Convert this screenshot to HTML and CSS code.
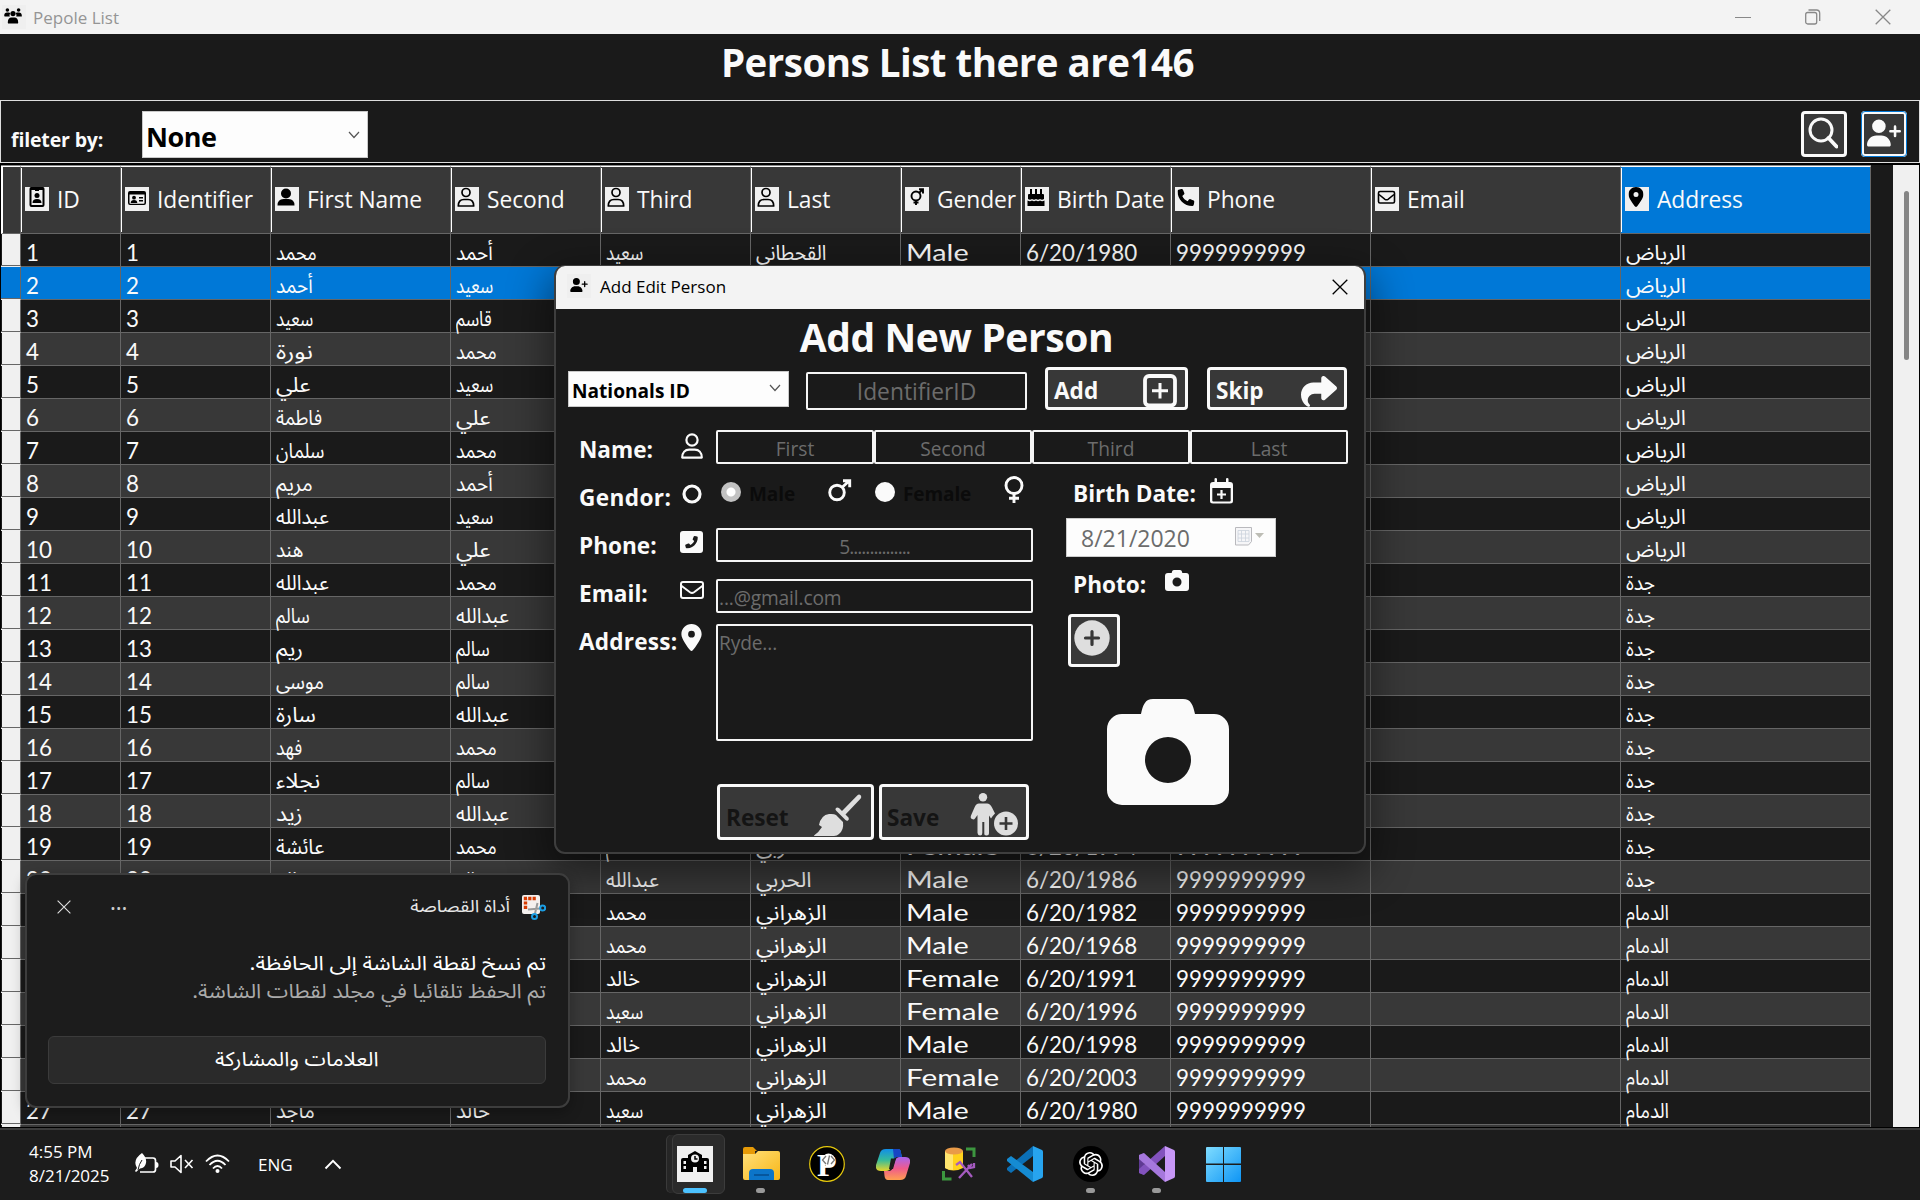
FILE: index.html
```html
<!DOCTYPE html>
<html lang="en">
<head>
<meta charset="utf-8">
<title>Pepole List</title>
<link rel="stylesheet" href="styles.css">
</head>
<body>
<svg class="sprite" aria-hidden="true">
  <symbol id="user-plus" viewBox="0 0 640 512"><path d="M96 128a128 128 0 1 1 256 0A128 128 0 1 1 96 128zM0 482.3C0 383.8 79.8 304 178.3 304h91.4C368.2 304 448 383.8 448 482.3c0 16.4-13.3 29.7-29.7 29.7H29.7C13.3 512 0 498.7 0 482.3zM504 312v-64h-64a24 24 0 0 1 0-48h64v-64a24 24 0 0 1 48 0v64h64a24 24 0 0 1 0 48h-64v64a24 24 0 0 1-48 0z"/></symbol>
  <symbol id="user-line" viewBox="0 0 22 26"><g fill="none" stroke="currentColor" stroke-width="2.2"><circle cx="11" cy="7" r="5.6"/><path d="M1.200 24.6c0-5 3-8 7-8h5.600c4 0 7 3 7 8z" stroke-linejoin="round"/></g></symbol>
  <symbol id="pin" viewBox="0 0 384 512"><path fill-rule="evenodd" d="M215.700 499.200C267 435 384 279.400 384 192C384 86 298 0 192 0S0 86 0 192c0 87.400 117 243 168.300 307.200c12.300 15.300 35.100 15.300 47.400 0zM192 128a64 64 0 1 1 0 128 64 64 0 1 1 0-128z"/></symbol>
  <symbol id="envelope" viewBox="0 0 24 18"><g fill="none" stroke="currentColor" stroke-width="2"><rect x="1" y="1" width="22" height="16" rx="2"/><path d="M1 4.500l9 6.800q2 1.400 4 0l9-6.800"/></g></symbol>
  <symbol id="phone" viewBox="0 0 512 512"><path d="M164.900 24.600c-7.700-18.600-28-28.500-47.400-23.200l-88 24C12.100 30.200 0 46 0 64C0 311.400 200.600 512 448 512c18 0 33.800-12.100 38.600-29.500l24-88c5.300-19.400-4.600-39.700-23.200-47.400l-96-40c-16.300-6.800-35.200-2.100-46.300 11.600L304.700 368C234.300 334.700 177.300 277.700 144 207.300L193.300 167c13.700-11.200 18.400-30 11.600-46.300l-40-96z"/></symbol>
  <symbol id="camera" viewBox="0 0 122 106"><path fill-rule="evenodd" d="M34 15C36 6 38 0 46 0H76C84 0 86 6 88 15H107A15 15 0 0 1 122 30V91A15 15 0 0 1 107 106H15A15 15 0 0 1 0 91V30A15 15 0 0 1 15 15ZM61 38a23 23 0 1 0 0 46 23 23 0 1 0 0-46Z"/></symbol>
  <symbol id="chevron" viewBox="0 0 12 8"><path d="M1 1l5 5.500L11 1" fill="none" stroke="#555" stroke-width="1.200"/></symbol>
  <symbol id="close" viewBox="0 0 16 16"><path d="M.7.7l14.600 14.600M15.300.7L.7 15.300" fill="none" stroke="currentColor" stroke-width="1.300"/></symbol>
  <symbol id="plus-disc" viewBox="0 0 36 36"><circle cx="18" cy="18" r="17.700"/><path d="M18 11.500v13M11.500 18h13" stroke="#383838" stroke-width="3.200" stroke-linecap="round"/></symbol>
  <symbol id="group" viewBox="0 0 44 40"><circle cx="8" cy="5" r="4.500"/><circle cx="36" cy="5" r="4.500"/><circle cx="22" cy="14" r="6.500"/><path d="M0 19c0-5 3-8 7-8h3c3 0 5 1 5 3-2 2-2 5-1 7H1zM44 19c0-5-3-8-7-8h-3c-3 0-5 1-5 3 2 2 2 5 1 7h14zM9 36c0-8 4-12 9-12h8c5 0 9 4 9 12 0 2-1 3-3 3H12c-2 0-3-1-3-3z"/></symbol>
  <symbol id="badge" viewBox="0 0 24 24"><path fill-rule="evenodd" d="M6 0h12q1.500 0 1.500 2v16q0 2-2 2h-11q-2 0-2-2V2q0-2 1.500-2zM6.500 3v15h11V3h-3.500v1h-4V3z"/><circle cx="12" cy="8.500" r="2.500"/><path d="M7.500 16q0-4 4.500-4t4.500 4z"/></symbol>
  <symbol id="idcard" viewBox="0 0 24 24"><path fill-rule="evenodd" d="M5 4h14q2 0 2 2v10q0 2-2 2H5q-2 0-2-2V6q0-2 2-2zM4.500 7.500V16q0 .8.800.8h13.400q.8 0 .8-.8V7.500z"/><circle cx="9" cy="10.700" r="1.900"/><path d="M5.700 16q0-3 3.300-3t3.300 3zM14 10h4v1.400h-4zM14 13h4v1.400h-4z"/></symbol>
  <symbol id="user" viewBox="0 0 24 24"><circle cx="11" cy="6.500" r="5"/><path d="M2.500 18.500q0-6.500 6-6.500h5q6 0 6 6.500z"/></symbol>
  <symbol id="user-open" viewBox="0 0 24 24"><g fill="none" stroke="#000" stroke-width="1.700"><circle cx="11" cy="5.500" r="4"/><path d="M3.300 19q0-6.500 5.700-6.500h4q5.700 0 5.700 6.500z" stroke-linejoin="round"/></g></symbol>
  <symbol id="gender" viewBox="0 0 24 24"><g fill="none" stroke="#000" stroke-width="1.900"><circle cx="11" cy="9" r="4.500"/><path d="M14 6l4-4M14 2.300h4V6.500M11 13.500V18M8.500 15.500h5"/></g></symbol>
  <symbol id="cake" viewBox="0 0 24 24"><path d="M5 2h2v5H5zM10 2h2v5h-2zM15 2h2v5h-2zM4 7h14q1 0 1 1v4q-2 1.500-4 0-2 1.500-4 0-2 1.500-4 0-2 1.500-4 0V8q0-1 1-1zM2.500 13.500q2.500 1.500 4.500 0 2 1.500 4 0 2 1.500 4 0 2 1.500 4.500 0V19h-17z"/></symbol>
  <symbol id="mail" viewBox="0 0 24 24"><g fill="none" stroke="#000" stroke-width="1.600"><rect x="3.500" y="4.500" width="16" height="11.500" rx="1.500"/><path d="M4 7.500l6 4.800q1.500 1 3 0l6-4.800"/></g></symbol>
</svg>

<div class="desktop">
  <header class="titlebar">
    <span class="app-icon"><svg width="18" height="16"><use href="#group"/></svg></span>
    <span class="titlebar-text">Pepole List</span>
    <span class="window-controls">
      <svg width="16" height="16" viewBox="0 0 16 16"><path d="M0 8.500h16" stroke="#888"/></svg>
      <svg width="16" height="16" viewBox="0 0 16 16" fill="none" stroke="#888" stroke-width="1.300"><rect x=".7" y="3.500" width="11" height="11.500" rx="2"/><path d="M3.500 1h8q3.200 0 3.200 3.200V12"/></svg>
      <svg width="16" height="16"><use href="#close"/></svg>
    </span>
  </header>

  <h1 class="heading">Persons List there are146</h1>

  <section class="filter">
    <span class="filter-label">fileter by:</span>
    <div class="combo combo-filter"><span>None</span><svg width="12" height="8"><use href="#chevron"/></svg></div>
    <div class="filter-actions">
      <button class="tool"><svg width="30" height="32" viewBox="0 0 30 32" fill="none" stroke="#fafafa"><ellipse cx="13" cy="13" rx="11" ry="11" stroke-width="3"/><path d="M20.500 21l8 8.500" stroke-width="3.800" stroke-linecap="round"/></svg></button>
      <button class="tool tool-focus"><svg width="34" height="28"><use href="#user-plus"/></svg></button>
    </div>
  </section>

  <main class="table-area">
    <div class="table" id="table">
      <div class="row head">
        <div class="stub"></div>
        <div class="th"><svg><use href="#badge"/></svg><span>ID</span></div>
        <div class="th"><svg><use href="#idcard"/></svg><span>Identifier</span></div>
        <div class="th"><svg><use href="#user"/></svg><span>First Name</span></div>
        <div class="th"><svg><use href="#user-open"/></svg><span>Second</span></div>
        <div class="th"><svg><use href="#user-open"/></svg><span>Third</span></div>
        <div class="th"><svg><use href="#user-open"/></svg><span>Last</span></div>
        <div class="th"><svg><use href="#gender"/></svg><span>Gender</span></div>
        <div class="th"><svg><use href="#cake"/></svg><span>Birth Date</span></div>
        <div class="th"><svg viewBox="0 0 24 24"><use href="#phone" x="2.500" y="2" width="17" height="17"/></svg><span>Phone</span></div>
        <div class="th"><svg><use href="#mail"/></svg><span>Email</span></div>
        <div class="th picked"><svg viewBox="0 0 24 24"><use href="#pin" x="3.500" y="0" width="15" height="20"/></svg><span>Address</span></div>
      </div>
    </div>
    <div class="scrollbar"><div class="thumb"></div></div>
  </main>

  <footer class="taskbar">
    <div class="clock"><span>4:55 PM</span><span>8/21/2025</span></div>
    <div class="tray">
      <svg width="25" height="22" viewBox="0 0 25 22"><path d="M10 5h9q2.500 0 2.500 2.500v9q0 2.500-2.500 2.500H6" fill="none" stroke="#fff" stroke-width="1.700"/><path d="M22 9q2.500 0 2.500 3t-2.500 3z" fill="#fff"/><path d="M8 0q5 5 4 10-1 5-6 5.500L2 19l-1-1 2-3Q-2 7 8 0z" fill="#fff"/><path d="M4 17q1-6 4-10" stroke="#1c1c1c" fill="none"/></svg>
      <svg width="24" height="20" viewBox="0 0 24 20" fill="none" stroke="#fff" stroke-width="1.600"><path d="M1 7h4l6-5.500v17L5 13H1z" stroke-linejoin="round"/><path d="M15 6l7.500 8M22.500 6L15 14"/></svg>
      <svg width="25" height="20" viewBox="0 0 25 20" fill="none" stroke="#fff" stroke-width="1.800"><path d="M1 7.500q11.500-12 23 0M4.500 11q8-8.500 16 0M8 14.500q4.500-5 9 0"/><circle cx="12.500" cy="17" r="2" fill="#fff" stroke="none"/></svg>
    </div>
    <span class="lang">ENG</span>
    <svg class="tray-more" width="18" height="11" viewBox="0 0 18 11"><path d="M1.500 9.500L9 1.800l7.500 7.700" fill="none" stroke="#fff" stroke-width="1.900"/></svg>

    <nav class="apps">
      <div class="app stacked"><span class="tile"><svg width="36" height="36" viewBox="0 0 36 36"><rect width="36" height="36" fill="#f0f0f0"/><path fill="#000" fill-rule="evenodd" d="M4 14q0-2 2-2h5V9l7-4 7 4v3h5q2 0 2 2v12H20v-5h-4v5H4zM6.500 15v3H9v-3zM6.500 20v3H9v-3zM27 15v3h2.500v-3zM27 20v3h2.500v-3zM18 8.500a4 4 0 1 0 0 8 4 4 0 1 0 0-8z"/><path d="M18 10v3h2.500" fill="none" stroke="#000" stroke-width="1.500"/></svg></span><i class="run active"></i></div>
      <div class="app"><svg width="37" height="34" viewBox="0 0 37 34"><defs><linearGradient id="fold" x2="1" y2="1"><stop stop-color="#ffe07a"/><stop offset="1" stop-color="#f8b617"/></linearGradient></defs><path d="M0 2q0-2 2-2h8l4 4h-2v10H0z" fill="#e69a07"/><path d="M0 7h12l3-3h20q2 0 2 2v25q0 2-2 2H2q-2 0-2-2z" fill="url(#fold)"/><path d="M6 33v-7q0-4 4-4h17q4 0 4 4v7z" fill="#0c75c9"/><path d="M11 28h15" stroke="#064f92" stroke-width="1.600"/></svg><i class="run"></i></div>
      <div class="app"><svg width="36" height="36" viewBox="0 0 36 36"><circle cx="18" cy="18" r="17.300" fill="#000" stroke="#e5c80d" stroke-width="1.200"/><text x="8" y="30" class="p-letter">P</text><circle cx="19.500" cy="14" r="6.500" fill="#fff"/><path d="M17 10l-3.500 4 3.500 4M22 10l3.500 4-3.500 4M20.500 9.500l-2 9" stroke="#777" fill="none" stroke-width="1.300"/></svg></div>
      <div class="app"><svg width="34" height="31" viewBox="0 0 34 31"><defs><linearGradient id="ca" x2="0" y2="1"><stop stop-color="#118ee9"/><stop offset=".5" stop-color="#35bb9b"/><stop offset="1" stop-color="#e8d52a"/></linearGradient><linearGradient id="cb" x2="0" y2="1"><stop stop-color="#a864ef"/><stop offset=".5" stop-color="#ef5b8c"/><stop offset="1" stop-color="#ff9f50"/></linearGradient></defs><path d="M10 0h12q3 0 3 4l1 4h-5q-3 0-4 4l-2 6q-1 4-5 4H5q-6 0-5-6L4 4q1-4 6-4z" fill="url(#ca)"/><path d="M24 31H12q-3 0-3.500-4L8 22h5q3 0 4-4l2-6q1-4 5-4h5q6 0 5 6l-4 13q-1 4-6 4z" fill="url(#cb)"/><path d="M17 0h5q3 0 3 4l1 4h-5q-2 0-3 2z" fill="#1745c4"/><path d="M15 9.500h5l-3 10.500h-4z" fill="#1c1c1c"/></svg></div>
      <div class="app"><svg width="34" height="34" viewBox="0 0 34 34"><path d="M3 4v17q8 5 18 0V4z" fill="#ffd21c"/><path d="M3 4v17q3 2 8 2V4z" fill="#ffe56f"/><ellipse cx="12" cy="4" rx="9" ry="3.500" fill="#e99b48"/><path d="M24 2h8v8M1.500 24v8h8" fill="none" stroke="#3c963f" stroke-width="3"/><path d="M14 18l4-3 12 15M30 17L17 31M26 18l2 3 4-1v-4" fill="none" stroke="#a55bc0" stroke-width="2.300"/></svg></div>
      <div class="app"><svg width="36" height="36" viewBox="0 0 36 36"><path d="M26 0v10L4 27l-4-3v-2z" fill="#0b70b7"/><path d="M26 36V26L4 10l-4 3v2z" fill="#158bd2"/><path d="M26 0l9 4q1 .5 1 2v24q0 1.500-1 2l-9 4z" fill="#27a4ef"/></svg></div>
      <div class="app"><svg width="36" height="36" viewBox="0 0 36 36"><circle cx="18" cy="18" r="18" fill="#000"/><path transform="translate(6 6)" fill="#fff" d="M22.2819 9.8211a5.9847 5.9847 0 0 0-.5157-4.9108 6.0462 6.0462 0 0 0-6.5098-2.9A6.0651 6.0651 0 0 0 4.9807 4.1818a5.9847 5.9847 0 0 0-3.9977 2.9 6.0462 6.0462 0 0 0 .7427 7.0966 5.98 5.98 0 0 0 .511 4.9107 6.051 6.051 0 0 0 6.5146 2.9001A5.9847 5.9847 0 0 0 13.2599 24a6.0557 6.0557 0 0 0 5.7718-4.2058 5.9894 5.9894 0 0 0 3.9977-2.9001 6.0557 6.0557 0 0 0-.7475-7.0729zm-9.022 12.6081a4.4755 4.4755 0 0 1-2.8764-1.0408l.1419-.0804 4.7783-2.7582a.7948.7948 0 0 0 .3927-.6813v-6.7369l2.02 1.1686a.071.071 0 0 1 .038.052v5.5826a4.504 4.504 0 0 1-4.4945 4.4944zm-9.6607-4.1254a4.4708 4.4708 0 0 1-.5346-3.0137l.142.0852 4.783 2.7582a.7712.7712 0 0 0 .7806 0l5.8428-3.3685v2.3324a.0804.0804 0 0 1-.0332.0615L9.74 19.9502a4.4992 4.4992 0 0 1-6.1408-1.6464zM2.3408 7.8956a4.485 4.485 0 0 1 2.3655-1.9728V11.6a.7664.7664 0 0 0 .3879.6765l5.8144 3.3543-2.0201 1.1685a.0757.0757 0 0 1-.071 0l-4.8303-2.7865A4.504 4.504 0 0 1 2.3408 7.872zm16.5963 3.8558L13.1038 8.364 15.1192 7.2a.0757.0757 0 0 1 .071 0l4.8303 2.7913a4.4944 4.4944 0 0 1-.6765 8.1042v-5.6772a.79.79 0 0 0-.407-.667zm2.0107-3.0231l-.142-.0852-4.7735-2.7818a.7759.7759 0 0 0-.7854 0L9.409 9.2297V6.8974a.0662.0662 0 0 1 .0284-.0615l4.8303-2.7866a4.4992 4.4992 0 0 1 6.6802 4.66zM8.3065 12.863l-2.02-1.1638a.0804.0804 0 0 1-.038-.0567V6.0742a4.4992 4.4992 0 0 1 7.3757-3.4537l-.142.0805L8.704 5.459a.7948.7948 0 0 0-.3927.6813zm1.0976-2.3654l2.602-1.4998 2.6069 1.4998v2.9994l-2.5974 1.4997-2.6067-1.4997Z"/></svg><i class="run"></i></div>
      <div class="app"><svg width="36" height="36" viewBox="0 0 36 36"><path d="M0 9l5-2v22l-5-2z" fill="#5f3a93"/><path d="M26 0v10L5 29l-5-2v-4z" fill="#8252bd"/><path d="M5 7l21 19v10L0 13V9z" fill="#a678dd"/><path d="M26 0l9 4q1 .5 1 2v24q0 1.500-1 2l-9 4z" fill="#c797f7"/></svg><i class="run"></i></div>
      <div class="app"><svg width="35" height="35" viewBox="0 0 35 35"><defs><linearGradient id="win" gradientUnits="userSpaceOnUse" x1="0" y1="0" x2="35" y2="35"><stop stop-color="#7fdcff"/><stop offset="1" stop-color="#0e95f5"/></linearGradient></defs><path fill="url(#win)" d="M1 0h16v16.500H0V1q0-1 1-1zM18 0h16q1 0 1 1v15.500H18zM0 18h17v17H1q-1 0-1-1zM18 18h17v16q0 1-1 1H18z"/></svg></div>
    </nav>
  </footer>

  <div class="dialog">
    <div class="dialog-bar">
      <span class="app-icon"><svg width="18" height="14"><use href="#user-plus"/></svg></span>
      <span class="dialog-caption">Add Edit Person</span>
      <svg class="dialog-close" width="16" height="16"><use href="#close"/></svg>
    </div>
    <h2 class="dialog-title">Add New Person</h2>

    <div class="identity">
      <div class="combo combo-id"><span>Nationals ID</span><svg width="12" height="8"><use href="#chevron"/></svg></div>
      <div class="field field-id">IdentifierID</div>
      <button class="btn btn-add"><span>Add</span><svg width="34" height="33" viewBox="0 0 34 33" fill="none" stroke="#fafafa"><rect x="2" y="2" width="30" height="29.500" rx="4" stroke-width="3.800"/><path d="M17 9v15.500M9 16.800h16" stroke-width="3"/></svg></button>
      <button class="btn btn-skip"><span>Skip</span><svg width="36" height="31" viewBox="0 32 512 450" preserveAspectRatio="none"><path d="M307 34.800c-11.500 5.100-19 16.600-19 29.200v64H176C78.800 128 0 206.800 0 304C0 417.300 81.500 467.900 100.200 478.100c2.500 1.400 5.300 1.900 8.100 1.900c10.900 0 19.700-8.900 19.700-19.700c0-7.500-4.300-14.400-9.800-19.500C108.800 431.900 96 414.400 96 384c0-53 43-96 96-96h96v64c0 12.600 7.400 24.100 19 29.200s25 3 34.400-5.400l160-144c6.700-6.100 10.600-14.700 10.600-23.800s-3.800-17.700-10.600-23.800l-160-144c-9.400-8.500-22.900-10.600-34.400-5.400z"/></svg></button>
    </div>

    <div class="line line-name">
      <span class="label">Name:</span>
      <span class="glyph"><svg width="22" height="26"><use href="#user-line"/></svg></span>
      <div class="names"><div class="field">First</div><div class="field">Second</div><div class="field">Third</div><div class="field">Last</div></div>
    </div>

    <div class="columns">
      <div class="left">
        <div class="line line-gender">
          <span class="label">Gendor:</span>
          <span class="glyph"><svg width="20" height="20" viewBox="0 0 20 20"><circle cx="10" cy="10" r="8" fill="none" stroke="#fafafa" stroke-width="3.200"/></svg></span>
          <div class="radios">
            <i class="radio checked"></i><b class="r-male">Male</b>
            <svg class="mars" width="24" height="23" viewBox="0 0 24 23" fill="none" stroke="#fafafa" stroke-width="2.900"><circle cx="9" cy="13.500" r="7.300"/><path d="M14 8.500l7-6.500M15 1.800h6.700v6.500"/></svg>
            <i class="radio"></i><b class="r-female">Female</b>
            <svg class="venus" width="20" height="27" viewBox="0 0 20 27" fill="none" stroke="#fafafa" stroke-width="2.900"><circle cx="10" cy="9.500" r="8"/><path d="M10 17.500V27M5 22.200h10"/></svg>
          </div>
        </div>
        <div class="line line-phone">
          <span class="label">Phone:</span>
          <span class="glyph"><svg width="23" height="22" viewBox="0 0 23 22"><rect width="23" height="22" rx="3"/><use href="#phone" transform="translate(23 0) scale(-1 1)" x="5" y="5" width="13" height="12.500" fill="#1a1a1a"/></svg></span>
          <div class="field">5...............</div>
        </div>
        <div class="line line-email">
          <span class="label">Email:</span>
          <span class="glyph"><svg width="24" height="18"><use href="#envelope"/></svg></span>
          <div class="field">...@gmail.com</div>
        </div>
        <div class="line line-address">
          <span class="label">Address:</span>
          <span class="glyph"><svg width="21" height="27"><use href="#pin"/></svg></span>
          <div class="field field-area">Ryde...</div>
        </div>
        <div class="commands">
          <button class="btn btn-reset"><span>Reset</span><svg width="48" height="43" viewBox="0 0 48 43" fill="#dedede"><path d="M0 41.500Q5 38 8 33L5 31Q7 21 15 20q5-.5 7 1l7 7q1 8-4 12-2 2-5 2H1q-1 0-1-.500z"/><path d="M22 14q1-1 3 0l3 3L43.500 1.200Q45 0 46.700 1.200 48 3 46.700 4.500L31.500 20.500l3 3q1 2-.5 3-1.200.8-2.500-.5L22 16.500q-1.200-1.200 0-2.500z"/></svg></button>
          <button class="btn btn-save"><span>Save</span><svg width="48" height="43" viewBox="0 0 48 43" fill="#dedede"><circle cx="13" cy="4.200" r="4.200"/><path d="M9 10.500h8q3 0 5 4l3 6q-3 3-4 5l-2-3v17.500q0 2.500-2.500 2.500T14.300 40V29h-2v11q0 2.500-2.200 2.500T7.500 40V22L5 25.500Q4 27 2 26t-1-3.500l3.500-8Q6 10.500 9 10.500z"/><circle cx="36" cy="30.500" r="12"/><path d="M36 24v13M29.500 30.500h13" stroke="#383838" stroke-width="2.600"/></svg></button>
        </div>
      </div>

      <div class="right">
        <div class="caption caption-birth"><span>Birth Date:</span><svg width="23" height="26" viewBox="0 0 23 26"><path fill-rule="evenodd" d="M4.500 1q0-1 1.200-1T7 1v3h9V1q0-1 1.200-1t1.300 1v3H20q3 0 3 3v16q0 2.500-3 2.500H3q-3 0-3-2.500V7q0-3 3-3h1.500zM2.300 10v12.500q0 1 1 1h16.400q1 0 1-1V10z"/><path d="M11.500 12v9M7 16.500h9" stroke="#fafafa" stroke-width="2.200"/></svg></div>
        <div class="date"><span>8/21/2020</span><svg width="29" height="19" viewBox="0 0 29 19"><path d="M.5.500h16v14l-3 3.500H.5z" fill="#f6f6f8" stroke="#b9b9bd"/><path d="M3 3.500h11v11H3zM3 7h11M3 11h11M6.500 3.500v11M10.500 3.500v11" fill="none" stroke="#ccd3dc" stroke-width=".8"/><path d="M20 6h9l-4.500 5z" fill="#bdbdb5"/></svg></div>
        <div class="caption caption-photo"><span>Photo:</span><svg width="24" height="21"><use href="#camera"/></svg></div>
        <button class="btn btn-photo"><svg width="36" height="36" fill="#dedede"><use href="#plus-disc"/></svg></button>
        <svg class="photo" width="122" height="106"><use href="#camera"/></svg>
      </div>
    </div>
  </div>

  <div class="toast" dir="rtl" lang="ar">
    <div class="toast-head">
      <svg width="24" height="25" viewBox="0 0 24 25"><rect width="18" height="19" rx="2" fill="#f4f0ee"/><path d="M3.500 14V3.500H14" fill="none" stroke="#d83b01" stroke-width="3.400" stroke-dasharray="3.200 1.200"/><path d="M13 18.500L15.500 8M6 14.500l12-1" stroke="#9a9a9a" stroke-width="2"/><g fill="none" stroke="#1b9de2" stroke-width="2"><circle cx="12.500" cy="21.500" r="2.500"/><circle cx="20.700" cy="13" r="2.500"/></g></svg>
      <span class="toast-app">أداة القصاصة</span>
      <span class="toast-more">…</span>
      <svg class="toast-close" width="14" height="14"><use href="#close"/></svg>
    </div>
    <p class="toast-title"><span>تم نسخ لقطة الشاشة إلى الحافظة.</span></p>
    <p class="toast-sub"><span>تم الحفظ تلقائيا في مجلد لقطات الشاشة.</span></p>
    <div class="toast-button"><span>العلامات والمشاركة</span></div>
  </div>
</div>
<script src="script.js"></script>
</body>
</html>
```
FILE: styles.css
```css
* { box-sizing: border-box; }
body {
  margin: 0;
  background: #1a1a1a;
  color: #fafafa;
  fill: currentColor;
  font-family: "Open Sans", "Noto Sans Arabic", "DejaVu Sans", sans-serif;
  overflow: hidden;
}
.sprite { position: absolute; width: 0; height: 0; }
svg { display: block; flex: none; }
button { font: inherit; color: inherit; padding: 0; margin: 0; }
.desktop { width: 1920px; height: 1200px; display: flex; flex-direction: column; position: relative; overflow: hidden; }

/* main window */
.titlebar { height: 34px; background: #f3f3f3; color: #959595; display: flex; align-items: center; padding: 0 29px 0 2px; flex: none; }
.app-icon { width: 24px; height: 24px; background: #efefef; color: #000; display: flex; align-items: flex-start; justify-content: center; padding-top: 3px; }
.titlebar .app-icon { margin-top: 0; padding-right: 2px; }
.titlebar-text { font-size: 17px; letter-spacing: 0; margin-left: 7px; }
.window-controls { margin-left: auto; display: flex; gap: 54px; color: #888; }
.heading { margin: 0; height: 66px; flex: none; font-size: 38.5px; line-height: 57px; letter-spacing: -.5px; text-align: center; text-indent: -5px; }
.filter { height: 63px; flex: none; border: 1px solid #dedede; display: flex; align-items: flex-start; padding: 10px 12px 0 10px; }
.filter-label { font-size: 19.5px; font-weight: 700; line-height: 28px; letter-spacing: -.15px; margin-top: 15px; width: 131px; }
.combo { background: #fdfdfd; color: #000; border: 1px solid #c9c9c9; display: flex; align-items: center; justify-content: space-between; font-weight: 700; }
.combo-filter { width: 226px; height: 47px; padding: 4px 7px 0 3px; font-size: 27px; letter-spacing: -.5px; }
.combo-filter svg { margin-top: -4px; }
.filter-actions { margin-left: auto; display: flex; gap: 14px; }
.tool { width: 46px; height: 46px; background: #383838; border: 3px solid #fafafa; border-radius: 4px; display: flex; padding: 3px 0 0 4px; }
.tool-focus { outline: 1px solid #0078d7; outline-offset: -1px; padding: 5px 0 0 3px; }

/* table */
.table-area { flex: 1; min-height: 0; display: flex; border-top: 2px solid #000; border-left: 1px solid #000; border-right: 1px solid #000; overflow: hidden; }
.table { width: 1870px; flex: none; overflow: hidden; }
.row { display: grid; grid-template-columns: 20px 100px 150px 180px 150px 150px 150px 120px 150px 200px 250px 250px; height: 33px; }
.row > div { border-right: 1px solid #666; border-bottom: 1px solid #666; white-space: nowrap; min-width: 0; }
.row > .stub { background: linear-gradient(90deg, #1a1a1a 1px, #f0f0f0 1px); border-bottom-color: #f0f0f0; box-shadow: inset 0 -1px 0 #666; }
.row.alt { background: #383838; }
.row.selected, .row.selected > .stub { background: #0078d7; }
.row.head { height: 69px; background: #383838; border-top: 1px solid #888; }
.row.head > .stub { background: #383838; border-top: 1px solid #fff; border-left: 2px solid #fff; border-bottom-color: #666; box-shadow: none; }
.th { display: flex; align-items: center; border-top: 1px solid #fff; background: linear-gradient(#fff, #fff) 0 1px / 1px 64px no-repeat; padding: 0 0 2px 4px; font-size: 22.8px; letter-spacing: -.05px; }
.th svg { width: 24px; height: 24px; background: #f0f0f0; color: #000; fill: #000; }
.th span { margin-left: 8px; }
.th.picked { background: linear-gradient(#fff, #fff) 0 1px / 1px 64px no-repeat #0078d7; }
.td { padding: 2px 0 0 5px; font-family: Lato, "DejaVu Sans", sans-serif; font-size: 22.4px; line-height: 33px; height: 33px; }
.td.ar { padding: 3px 0 0 5px; line-height: 32px; font-family: "Noto Sans Arabic", "DejaVu Sans", sans-serif; font-size: 21px; }
.td.ar span, .td.gender span { display: inline-block; transform-origin: 0 50%; transform: scaleX(var(--stretch, 1)); }
.scrollbar { width: 26px; margin-left: auto; background: #f0f0f0; padding-top: 26px; }
.thumb { width: 5px; height: 169px; margin-left: 11px; background: #858585; border-radius: 3px; }

/* taskbar */
.taskbar { height: 73px; flex: none; background: #1c1c1c; border-top: 1px solid #000; box-shadow: inset 0 2px 0 #3c3c3c; display: flex; align-items: center; position: relative; padding-left: 29px; color: #fff; }
.clock { display: flex; flex-direction: column; font-size: 17px; line-height: 24px; letter-spacing: 0; width: 105px; }
.tray { display: flex; align-items: center; gap: 11px; }
.lang { font-size: 17px; letter-spacing: 0; margin-left: 28px; width: 66px; }
.apps { position: absolute; left: 662px; top: 0; display: flex; }
.app { width: 66px; height: 72px; display: flex; justify-content: center; align-items: center; position: relative; }
.tile { width: 53px; height: 60px; background: #2b2b2b; border: 1px solid #3c3c3c; border-radius: 6px; display: grid; place-items: center; margin-left: 6px; box-shadow: -6px 0 0 -1px #262626, -7px 0 0 -1px #3a3a3a; }
.stacked .tile svg { margin-left: -6px; }
.run { position: absolute; bottom: 7px; left: 28px; width: 9px; height: 5px; border-radius: 3px; background: #999; }
.run.active { left: 21px; width: 24px; background: #4cc2ff; }
.p-letter { font: 700 32px "Liberation Serif", serif; fill: #fff; }

/* dialog */
.dialog { position: absolute; left: 554px; top: 265px; width: 812px; height: 589px; background: #1a1a1a; border: 2px solid #3e3e3e; border-top-width: 1px; border-radius: 11px; overflow: hidden; display: flex; flex-direction: column; box-shadow: 0 14px 40px 6px rgba(0, 0, 0, .45); }
.dialog-bar { height: 43px; flex: none; background: #f3f3f3; color: #000; display: flex; align-items: center; padding: 0 16px 0 11px; }
.dialog-bar .app-icon { margin-top: -3px; padding-top: 4px; }
.dialog-caption { font-size: 17px; letter-spacing: 0; margin: -3px 0 0 9px; }
.dialog-close { margin: -2px 0 0 auto; }
.dialog-title { margin: 0; height: 58px; flex: none; font-size: 39px; line-height: 56px; letter-spacing: -.4px; text-align: center; text-indent: -7px; }
.identity { height: 63px; flex: none; display: flex; align-items: flex-start; padding-left: 12px; }
.combo-id { width: 221px; height: 36px; margin: 4px 17px 0 0; font-size: 19.100px; padding: 3px 7px 0 3px; letter-spacing: 0; }
.combo-id svg { margin-top: -5px; }
.field { border: 2px solid #f5f5f5; border-radius: 2px; color: #6c6c6c; height: 34px; font-size: 19.200px; line-height: 33px; white-space: nowrap; text-align: center; }
.field-id { width: 221px; height: 38px; margin: 5px 18px 0 0; font-size: 22.800px; line-height: 36px; }
.btn { border: 3px solid #fafafa; border-radius: 4px; background: #383838; display: flex; justify-content: space-between; align-items: flex-start; font-weight: 700; font-size: 22.600px; line-height: 31px; white-space: nowrap; }
.btn-add { width: 143px; height: 43px; margin-right: 19px; padding: 5px 8px 0 6px; }
.btn-add svg { margin-top: -1px; }
.btn-skip { width: 140px; height: 43px; padding: 5px 7px 0 6px; }
.btn-skip svg { margin-top: 1px; }
.line { display: flex; align-items: flex-start; padding-left: 23px; }
.label { width: 100px; font-weight: 700; font-size: 22.600px; line-height: 30px; letter-spacing: 0; white-space: nowrap; }
.glyph { width: 25px; display: flex; justify-content: center; margin-right: 12px; flex: none; }
.line-name { height: 34px; flex: none; }
.line-name .label { margin-top: 5px; }
.line-name .glyph { margin-top: 3px; }
.names { display: grid; grid-template-columns: repeat(4, 158px); }
.columns { display: flex; gap: 32px; }
.left { width: 478px; }
.line-gender { height: 64px; }
.line-gender .label { margin-top: 19px; letter-spacing: .4px; }
.line-gender .glyph { margin-top: 20px; }
.radios { display: flex; padding-left: 5px; font-size: 19px; color: #0b0b0b; letter-spacing: -.1px; }
.radio { width: 20px; height: 20px; border-radius: 50%; background: #fafafa; margin-top: 18px; flex: none; }
.radio.checked { background: radial-gradient(circle, #fff 4px, #c2c2c2 5px); }
.radios b { margin: 17px 0 0 8px; line-height: 26px; }
.r-male { width: 79px; }
.r-female { width: 101px; }
.mars { margin: 15px 23px 0 0; }
.venus { margin-top: 12px; }
.line-phone .field, .line-email .field, .line-address .field { width: 317px; }
.line-phone { height: 51px; }
.line-phone .label { margin-top: 3px; }
.line-phone .glyph { margin-top: 3px; }
.line-phone .field { letter-spacing: -1px; }
.line-email { height: 45px; }
.line-email .label { margin-top: 0; }
.line-email .glyph { margin-top: 2px; }
.line-email .field, .line-address .field { text-align: left; padding-left: 1px; letter-spacing: -.15px; }
.line-address { height: 160px; }
.line-address .label { margin-top: 3px; letter-spacing: .2px; }
.line-address .field-area { height: 117px; }
.commands { display: flex; gap: 5px; padding-left: 161px; }
.commands .btn { height: 56px; color: #141414; }
.btn-reset { width: 157px; padding: 7px 9px 0 6px; }
.btn-save { width: 150px; padding: 6px 8px 0 5px; }
.btn-reset span { margin-top: 8px; }
.btn-save span { margin-top: 9px; }
.caption { display: flex; font-weight: 700; font-size: 22.600px; line-height: 30px; padding-left: 7px; letter-spacing: 0; }
.caption-birth { height: 54px; padding-top: 15px; gap: 14px; }
.caption-birth svg { margin-top: -1px; }
.date { width: 210px; height: 39px; background: #fdfdfd; color: #6c6c6c; border: 1px solid #ccc; display: flex; align-items: center; justify-content: space-between; padding: 0 11px 0 14px; font-size: 23px; }
.date svg { margin-top: -2px; }
.caption-photo { height: 57px; padding-top: 13px; gap: 19px; }
.caption-photo svg { margin-top: 0; }
.btn-photo { width: 52px; height: 53px; margin-left: 2px; padding: 3px 0 0 3px; justify-content: flex-start; }
.photo { margin: 32px 0 0 41px; }

/* notification */
.toast { position: absolute; left: 25px; top: 873px; width: 545px; height: 235px; background: #1c1c1c; border: 2px solid #3d3d3d; border-radius: 11px; padding: 17px 22px 0 21px; font-family: "Noto Sans Arabic", "DejaVu Sans", sans-serif; color: #fff; box-shadow: 0 4px 14px rgba(0, 0, 0, .3); }
.toast-head { height: 30px; display: flex; align-items: center; }
.toast-app { margin-right: 12px; font-size: 17px; color: #e6e6e6; transform: scaleX(1.12); transform-origin: 100% 50%; }
.toast-more { margin: -9px auto 0 39px; font-size: 22px; color: #ccc; }
.toast-close { margin-left: 9px; color: #ddd; }
.toast p { margin: 0; height: 28px; line-height: 28px; font-size: 20px; white-space: nowrap; }
.toast p span { display: inline-block; transform: scaleX(1.11); transform-origin: 100% 50%; }
.toast .toast-title { margin-top: 28px; }
.toast .toast-sub { color: #aaa; }
.toast .toast-sub span { transform: scaleX(1.085); }
.toast-button { margin-top: 30px; height: 48px; border: 1px solid #3b3b3b; border-radius: 6px; background: #2a2a2a; display: grid; place-items: center; font-size: 20px; }
.toast-button span { transform: scaleX(1.08); line-height: 28px; }
```
FILE: script.js
```js
// Columns: first, second, third, last, gender, birth date, address
const people = [
  ["محمد", "أحمد", "سعيد", "القحطاني", "Male", "6/20/1980", "الرياض"],
  ["أحمد", "سعيد", "", "", "", "", "الرياض"],
  ["سعيد", "قاسم", "", "", "", "", "الرياض"],
  ["نورة", "محمد", "", "", "", "", "الرياض"],
  ["علي", "سعيد", "", "", "", "", "الرياض"],
  ["فاطمة", "علي", "", "", "", "", "الرياض"],
  ["سلمان", "محمد", "", "", "", "", "الرياض"],
  ["مريم", "أحمد", "", "", "", "", "الرياض"],
  ["عبدالله", "سعيد", "", "", "", "", "الرياض"],
  ["هند", "علي", "", "", "", "", "الرياض"],
  ["عبدالله", "محمد", "", "", "", "", "جدة"],
  ["سالم", "عبدالله", "", "", "", "", "جدة"],
  ["ريم", "سالم", "", "", "", "", "جدة"],
  ["موسى", "سالم", "", "", "", "", "جدة"],
  ["سارة", "عبدالله", "", "", "", "", "جدة"],
  ["فهد", "محمد", "", "", "", "", "جدة"],
  ["نجلاء", "سالم", "", "", "", "", "جدة"],
  ["زيد", "عبدالله", "", "", "", "", "جدة"],
  ["عائشة", "محمد", "سالم", "الحربي", "Female", "6/20/1994", "جدة"],
  ["خالد", "سالم", "عبدالله", "الحربي", "Male", "6/20/1986", "جدة"],
  ["", "", "محمد", "الزهراني", "Male", "6/20/1982", "الدمام"],
  ["", "", "محمد", "الزهراني", "Male", "6/20/1968", "الدمام"],
  ["", "", "خالد", "الزهراني", "Female", "6/20/1991", "الدمام"],
  ["", "", "سعيد", "الزهراني", "Female", "6/20/1996", "الدمام"],
  ["", "", "خالد", "الزهراني", "Male", "6/20/1998", "الدمام"],
  ["", "", "محمد", "الزهراني", "Female", "6/20/2003", "الدمام"],
  ["ماجد", "خالد", "سعيد", "الزهراني", "Male", "6/20/1980", "الدمام"],
  ["", "", "", "", "", "", ""]
];

// Set widths of the words, in pixels
const wordWidths = {
  "محمد": 41, "أحمد": 37, "سعيد": 37, "قاسم": 36, "نورة": 37, "علي": 34, "فاطمة": 46,
  "سلمان": 48, "مريم": 37, "عبدالله": 53, "هند": 27, "سالم": 34, "ريم": 27, "موسى": 48,
  "سارة": 40, "فهد": 26, "نجلاء": 44, "زيد": 27, "عائشة": 48, "القحطاني": 70,
  "الرياض": 60, "ماجد": 39, "خالد": 34, "الزهراني": 71, "الحربي": 56, "جدة": 29, "الدمام": 43,
  "Male": 63, "Female": 93
};

const table = document.getElementById("table");
people.forEach(([first, second, third, last, gender, birth, address], i) => {
  const id = i < 20 || i === 26 ? String(i + 1) : "";
  const phone = gender ? "9999999999" : "";
  const row = document.createElement("div");
  row.className = "row" + (i % 2 ? " alt" : "") + (i === 1 ? " selected" : "");
  row.innerHTML = '<div class="stub"></div>';
  const cells = [[id], [id], [first, "ar"], [second, "ar"], [third, "ar"], [last, "ar"],
    [gender, "gender"], [birth, "birth"], [phone, "phone"], [""], [address, "ar"]];
  for (const [text, kind] of cells) {
    const cell = document.createElement("div");
    cell.className = "td" + (kind ? " " + kind : "");
    if (text) {
      const span = document.createElement("span");
      span.textContent = text;
      cell.append(span);
    }
    row.append(cell);
  }
  table.append(row);
});

document.querySelectorAll(".td.ar span, .td.gender span").forEach((span) => {
  const width = wordWidths[span.textContent];
  if (width) span.style.setProperty("--stretch", (width / span.offsetWidth).toFixed(3));
});
```
